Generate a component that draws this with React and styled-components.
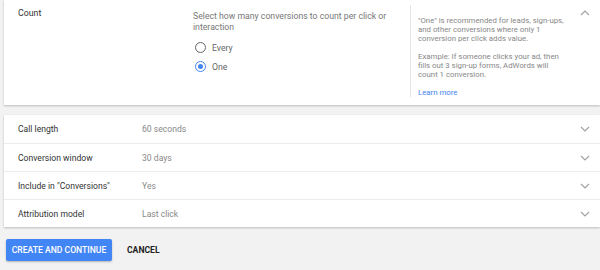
import React from "react";
import styled, { createGlobalStyle } from "styled-components";

const GlobalStyle = createGlobalStyle`
  body {
    margin: 0;
    background: #f2f2f2;
    font-family: Roboto, "Liberation Sans", sans-serif;
  }
`;

const Page = styled.div`
  width: 600px;
  height: 270px;
  overflow: hidden;
  padding-left: 4px;
  box-sizing: border-box;
`;

const Card = styled.div`
  background: #fff;
  box-shadow: 0 1px 2px rgba(0, 0, 0, 0.22);
  margin-bottom: ${(p) => p.$gap || 0}px;
`;

const Expanded = styled.div`
  display: grid;
  grid-template-columns: 189px 217px 1fr 30px;
  height: 105px;
`;

const Label = styled.div`
  padding: 8px 0 0 14px;
  font-size: 8.8px;
  color: #333;
`;

const Body = styled.div`
  padding-top: 11px;
`;

const Prompt = styled.div`
  font-size: 8.7px;
  line-height: 11px;
  color: #777;
  width: 205px;
`;

const Options = styled.div`
  display: flex;
  flex-direction: column;
  gap: 8px;
  margin-top: 9px;
  padding-left: 2px;
`;

const Option = styled.label`
  display: flex;
  align-items: center;
  gap: 6px;
  font-size: 8.7px;
  color: #666;
`;

const Radio = styled.span`
  width: 11px;
  height: 11px;
  border-radius: 50%;
  border: 1.3px solid ${(p) => (p.$on ? "#4285f4" : "#666")};
  display: flex;
  align-items: center;
  justify-content: center;
  box-sizing: border-box;
  &::after {
    content: "";
    width: 5px;
    height: 5px;
    border-radius: 50%;
    background: ${(p) => (p.$on ? "#4285f4" : "transparent")};
  }
`;

const Help = styled.div`
  margin: 5px 0 10px;
  border-left: 1px solid #e4e4e4;
  padding: 11px 0 0 7px;
  font-size: 7.8px;
  line-height: 9px;
  color: #888;
`;

const HelpPara = styled.p`
  margin: 0 0 9px;
  max-width: 148px;
`;

const Link = styled.a`
  color: #4285f4;
  text-decoration: none;
`;

const Chevron = styled.div`
  display: flex;
  justify-content: center;
  padding-top: ${(p) => (p.$top ? 10 : 0)}px;
  align-items: ${(p) => (p.$top ? "flex-start" : "center")};
`;

const Row = styled.div`
  display: grid;
  grid-template-columns: 138px 1fr 30px;
  height: 28px;
  box-sizing: border-box;
  align-items: center;
  border-top: ${(p) => (p.$first ? "none" : "1px solid #ececec")};
  font-size: 8.6px;
`;

const RowLabel = styled.div`
  padding-left: 14px;
  color: #333;
`;

const RowValue = styled.div`
  color: #888;
`;

const Actions = styled.div`
  display: flex;
  align-items: center;
  gap: 15px;
  padding-left: 2px;
`;

const Primary = styled.button`
  background: #4285f4;
  color: #fff;
  border: none;
  border-radius: 2px;
  height: 22px;
  width: 106px;
  padding: 0;
  font-family: inherit;
  font-size: 8.6px;
  font-weight: 500;
  box-shadow: 0 1px 2px rgba(0, 0, 0, 0.25);
`;

const Flat = styled.button`
  background: none;
  border: none;
  padding: 0;
  font-family: inherit;
  font-size: 8.6px;
  font-weight: 700;
  color: #222;
`;

const ChevronIcon = ({ up }) => (
  <svg width="10" height="6" viewBox="0 0 10 6">
    <path
      d={up ? "M1 5 L5 1 L9 5" : "M1 1 L5 5 L9 1"}
      fill="none"
      stroke="#a0a0a0"
      strokeWidth="1.1"
    />
  </svg>
);

const rows = [
  ["Call length", "60 seconds"],
  ["Conversion window", "30 days"],
  ['Include in "Conversions"', "Yes"],
  ["Attribution model", "Last click"],
];

export default function App() {
  return (
    <Page>
      <GlobalStyle />
      <Card $gap={10}>
        <Expanded>
          <Label>Count</Label>
          <Body>
            <Prompt>Select how many conversions to count per click or interaction</Prompt>
            <Options>
              <Option>
                <Radio />
                Every
              </Option>
              <Option>
                <Radio $on />
                One
              </Option>
            </Options>
          </Body>
          <Help>
            <HelpPara>
              "One" is recommended for leads, sign-ups, and other conversions where only 1
              conversion per click adds value.
            </HelpPara>
            <HelpPara>
              Example: If someone clicks your ad, then fills out 3 sign-up forms, AdWords will
              count 1 conversion.
            </HelpPara>
            <Link>Learn more</Link>
          </Help>
          <Chevron $top>
            <ChevronIcon up />
          </Chevron>
        </Expanded>
      </Card>
      <Card $gap={12}>
        {rows.map(([k, v], i) => (
          <Row key={k} $first={i === 0}>
            <RowLabel>{k}</RowLabel>
            <RowValue>{v}</RowValue>
            <Chevron>
              <ChevronIcon />
            </Chevron>
          </Row>
        ))}
      </Card>
      <Actions>
        <Primary>CREATE AND CONTINUE</Primary>
        <Flat>CANCEL</Flat>
      </Actions>
    </Page>
  );
}
